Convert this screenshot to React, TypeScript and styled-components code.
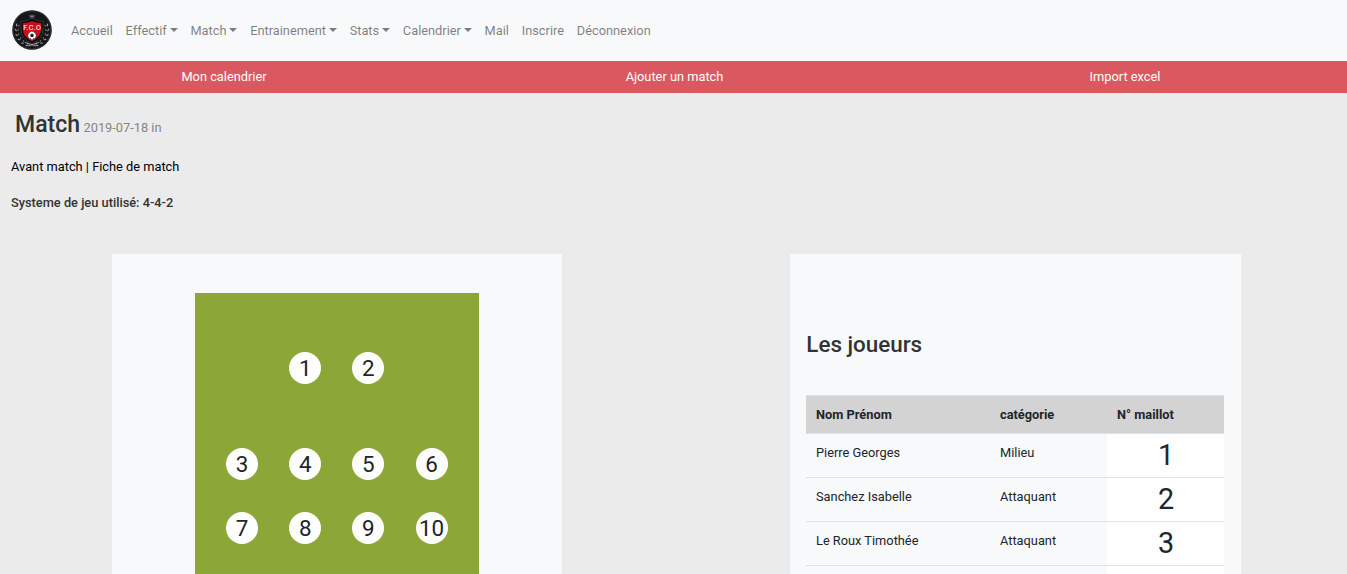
import React from "react";
import styled, { createGlobalStyle } from "styled-components";

const GlobalStyle = createGlobalStyle`
  html { font-size: 12.8px; }
  *, *::before, *::after { box-sizing: border-box; }
  body {
    margin: 0;
    height: 100vh;
    overflow: hidden;
    background: #ebebeb;
    color: #212529;
    font-family: Roboto, sans-serif;
    font-size: 1rem;
    line-height: 1.5;
  }
`;

const Page = styled.div`
  height: 100vh;
  overflow: hidden;
`;

const Navbar = styled.nav`
  display: flex;
  align-items: center;
  height: 61px;
  padding: 0 12px;
  background: #f8f9fb;
`;

const Brand = styled.a`
  display: flex;
  width: 40px;
  height: 40px;
  margin: -2px 12.6px 0 0;
`;

const NavLink = styled.a<{ $dropdown?: boolean }>`
  padding: 0.5rem;
  color: rgba(0, 0, 0, 0.5);
  white-space: nowrap;
  &::after {
    content: "";
    display: ${(p) => (p.$dropdown ? "inline-block" : "none")};
    margin-left: 2.9px;
    vertical-align: 0.255em;
    border-top: 4px solid;
    border-right: 4px solid transparent;
    border-left: 4px solid transparent;
  }
`;

const SubMenu = styled.nav`
  display: grid;
  grid-template-columns: 448px 453px 448px;
  height: 32px;
  align-items: center;
  text-align: center;
  color: #fff;
  background: #da5860;
`;

const TitleRow = styled.header`
  display: flex;
  align-items: baseline;
  gap: 3.5px;
  padding: 14px 15px 0;
  height: 64px;
`;

const Title = styled.h1`
  margin: 0;
  font-size: 23.04px;
  font-weight: 500;
  line-height: 35px;
  color: #333;
`;

const MatchDate = styled.span`
  color: #858585;
`;

const Tabs = styled.div`
  padding-left: 11px;
  height: 36px;
  color: #000;
`;

const System = styled.p`
  margin: 0;
  padding-left: 11px;
  height: 61px;
  font-weight: 500;
  color: #333;
`;

const Boards = styled.main`
  display: flex;
  gap: 228px;
  padding-left: 112px;
`;

const Panel = styled.section`
  height: 320px;
  background: #f8f9fb;
`;

const PitchPanel = styled(Panel)`
  width: 450px;
  padding: 39px 83px 0;
`;

const Pitch = styled.div`
  display: grid;
  grid-template-columns: repeat(4, 63.15px);
  grid-auto-rows: 32px;
  justify-items: center;
  height: 281px;
  padding: 59px 0 0 15.525px;
  background: #8ca738;
`;

const Position = styled.span<{ $row: number; $col: number }>`
  grid-row: ${(p) => p.$row};
  grid-column: ${(p) => p.$col};
  width: 32px;
  height: 32px;
  border-radius: 50%;
  background: #fff;
  font-size: 22.4px;
  line-height: 33px;
  text-align: center;
`;

const PlayersPanel = styled(Panel)`
  width: 451px;
  padding: 74px 17px 0 16px;
  overflow: hidden;
`;

const PlayersTitle = styled.h2`
  margin: 0 0 34px;
  padding-left: 0.3px;
  font-size: 22.4px;
  font-weight: 500;
  line-height: 33px;
  color: #333;
`;

const PlayersTable = styled.table`
  width: 418px;
  table-layout: fixed;
  border-spacing: 0;
`;

const HeadCell = styled.th<{ $width: number }>`
  width: ${(p) => p.$width}px;
  height: 38px;
  padding: 0 10px;
  border-top: 1px solid #dee2e6;
  background: #d3d3d3;
  text-align: left;
  font-weight: 700;
`;

const Cell = styled.td`
  height: 44px;
  padding: 9px 10px;
  border-top: 1px solid #dee2e6;
  vertical-align: top;
  line-height: 19px;
`;

const ShirtCell = styled(Cell)`
  padding: 0 0 0 1px;
  background: #fff;
  font-size: 28.8px;
  line-height: 43px;
  text-align: center;
`;

const links = [
  { label: "Accueil" },
  { label: "Effectif", dropdown: true },
  { label: "Match", dropdown: true },
  { label: "Entrainement", dropdown: true },
  { label: "Stats", dropdown: true },
  { label: "Calendrier", dropdown: true },
  { label: "Mail" },
  { label: "Inscrire" },
  { label: "Déconnexion" },
];

const positions = [
  [1, 1, 2],
  [2, 1, 3],
  [3, 4, 1],
  [4, 4, 2],
  [5, 4, 3],
  [6, 4, 4],
  [7, 6, 1],
  [8, 6, 2],
  [9, 6, 3],
  [10, 6, 4],
];

const players = [
  { name: "Pierre Georges", category: "Milieu" },
  { name: "Sanchez Isabelle", category: "Attaquant" },
  { name: "Le Roux Timothée", category: "Attaquant" },
  { name: "", category: "" },
];

const leaves = [0, 1, 2, 3, 4, 5];

const Logo = () => (
  <svg width="40" height="40" viewBox="0 0 40 40" aria-label="F.C.O">
    <circle cx="20" cy="20" r="19.8" fill="#151618" />
    <circle cx="20" cy="20" r="18.9" fill="none" stroke="#4a4c50" strokeWidth="0.5" />
    {[1, -1].map((side) => (
      <g key={side} transform={side === 1 ? undefined : "translate(40 0) scale(-1 1)"}>
        {leaves.map((i) => (
          <g key={i} transform={`rotate(${-i * 18} 20 20)`}>
            <ellipse cx="4.6" cy="15" rx="0.6" ry="1.5" fill="#a5a7a9" transform="rotate(-18 4.6 15)" />
            <ellipse cx="6.8" cy="15.6" rx="0.5" ry="1.2" fill="#7d7f82" transform="rotate(48 6.8 15.6)" />
          </g>
        ))}
        <path d="M13 32.5L24 36" stroke="#a0a1a3" strokeWidth="1" />
      </g>
    ))}
    <path d="M9 11.5Q15 11.5 20 8.5Q25 11.5 31 11.5V20Q30 29 20 33.5Q10 29 9 20Z" fill="#050505" stroke="#505256" strokeWidth="0.6" />
    <path d="M10.8 13Q16 13 20 11Q24 13 29.2 13V20Q28 27.5 20 31.5Q12 27.5 10.8 20Z" fill="#c7101b" />
    <path d="M17 4.5L19 6L20 4L21 6L23 4.5L22 7.5H18Z" fill="#777" />
    <text x="20.2" y="19.7" textAnchor="middle" fontFamily="Roboto, sans-serif" fontSize="7.2" letterSpacing="0.3" fill="#fff">F.C.O</text>
    <circle cx="20" cy="25.5" r="4.2" fill="#f3f3f3" stroke="#222" strokeWidth="0.5" />
    <path d="M20 23.6L21.8 25L21.1 27H18.9L18.2 25ZM16.2 24.2L17 22.5L18 22.3ZM23.8 24.2L23 22.5L22 22.3ZM17.3 28.3L18.7 28.2L19 29.4ZM22.7 28.3L21.3 28.2L21 29.4Z" fill="#181818" />
  </svg>
);

export default function App() {
  return (
    <Page>
      <GlobalStyle />
      <Navbar>
        <Brand><Logo /></Brand>
        {links.map((link) => (
          <NavLink key={link.label} $dropdown={link.dropdown}>{link.label}</NavLink>
        ))}
      </Navbar>
      <SubMenu>
        <a>Mon calendrier</a>
        <a>Ajouter un match</a>
        <a>Import excel</a>
      </SubMenu>
      <TitleRow>
        <Title>Match</Title>
        <MatchDate>2019-07-18 in</MatchDate>
      </TitleRow>
      <Tabs><a>Avant match</a> | <a>Fiche de match</a></Tabs>
      <System>Systeme de jeu utilisé: 4-4-2</System>
      <Boards>
        <PitchPanel>
          <Pitch>
            {positions.map(([n, row, col]) => (
              <Position key={n} $row={row} $col={col}>{n}</Position>
            ))}
          </Pitch>
        </PitchPanel>
        <PlayersPanel>
          <PlayersTitle>Les joueurs</PlayersTitle>
          <PlayersTable>
            <thead>
              <tr>
                <HeadCell $width={184}>Nom Prénom</HeadCell>
                <HeadCell $width={117}>catégorie</HeadCell>
                <HeadCell $width={117}>N° maillot</HeadCell>
              </tr>
            </thead>
            <tbody>
              {players.map((player, i) => (
                <tr key={i}>
                  <Cell>{player.name}</Cell>
                  <Cell>{player.category}</Cell>
                  <ShirtCell>{player.name && i + 1}</ShirtCell>
                </tr>
              ))}
            </tbody>
          </PlayersTable>
        </PlayersPanel>
      </Boards>
    </Page>
  );
}
